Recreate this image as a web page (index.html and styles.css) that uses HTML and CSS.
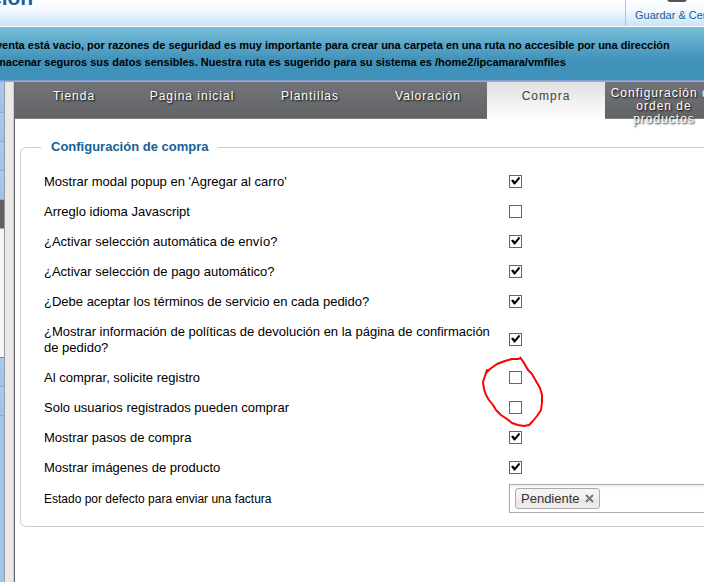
FILE: index.html
```html
<!DOCTYPE html>
<html lang="es">
<head>
<meta charset="utf-8">
<title>Configuración</title>
<link rel="stylesheet" href="styles.css">
</head>
<body>
<header class="header">
  <h1 class="title">ción</h1>
  <button class="save" type="button">
    <svg class="save-icon" viewBox="0 0 22 4" aria-hidden="true"><path d="M1 0h20v1l-2 2H3L1 1z" fill="#555"/><path d="M4 0h13v1H4z" fill="#ddd"/></svg>
    <span>Guardar &amp; Cerrar</span>
  </button>
</header>
<div class="notice">
  <p class="notice-text">venta está vacio, por razones de seguridad es muy importante para crear una carpeta en una ruta no accesible por una dirección<br>macenar seguros sus datos sensibles. Nuestra ruta es sugerido para su sistema es /home2/ipcamara/vmfiles</p>
</div>
<div class="layout">
  <aside class="sidebar">
    <div class="side-item"></div>
    <div class="side-item"></div>
    <div class="side-item"></div>
    <div class="side-item"></div>
    <div class="side-item side-active"></div>
    <div class="side-panel"></div>
    <div class="side-item"></div>
    <div class="side-item"></div>
  </aside>
  <div class="gutter"></div>
  <main class="main">
    <nav class="tabs">
      <a class="tab" href="#tienda">Tienda</a>
      <a class="tab" href="#inicial">Pagina inicial</a>
      <a class="tab" href="#plantillas">Plantillas</a>
      <a class="tab" href="#valoracion">Valoración</a>
      <a class="tab tab-active" href="#compra">Compra</a>
      <a class="tab tab-tall" href="#orden">Configuración de orden de productos</a>
    </nav>
    <form class="form">
      <fieldset class="group">
        <legend class="legend">Configuración de compra</legend>
        <div class="row"><label class="label" for="c1">Mostrar modal popup en 'Agregar al carro'</label><input class="check" type="checkbox" id="c1" checked></div>
        <div class="row"><label class="label" for="c2">Arreglo idioma Javascript</label><input class="check" type="checkbox" id="c2"></div>
        <div class="row"><label class="label" for="c3">¿Activar selección automática de envío?</label><input class="check" type="checkbox" id="c3" checked></div>
        <div class="row"><label class="label" for="c4">¿Activar selección de pago automático?</label><input class="check" type="checkbox" id="c4" checked></div>
        <div class="row"><label class="label" for="c5">¿Debe aceptar los términos de servicio en cada pedido?</label><input class="check" type="checkbox" id="c5" checked></div>
        <div class="row"><label class="label" for="c6">¿Mostrar información de políticas de devolución en la página de confirmación de pedido?</label><input class="check" type="checkbox" id="c6" checked></div>
        <div class="marked">
          <div class="row"><label class="label" for="c7">Al comprar, solicite registro</label><input class="check" type="checkbox" id="c7"></div>
          <div class="row"><label class="label" for="c8">Solo usuarios registrados pueden comprar</label><input class="check" type="checkbox" id="c8"></div>
          <svg class="mark" viewBox="480 354 66 76" aria-hidden="true"><path d="M521 358L518 359L512 359L505 361L497 364L490 369L486 373L487 370L485 376L483 382L484 389L486 395L489 400L493 405L496 410L501 415L507 419L512 423L518 425L524 426L529 425L533 421L537 416L541 410L542 402L542 395L540 388L536 381L532 374L528 370L524 363L520 357" fill="none" stroke="#f00" stroke-width="2" stroke-linejoin="round"/></svg>
        </div>
        <div class="row"><label class="label" for="c9">Mostrar pasos de compra</label><input class="check" type="checkbox" id="c9" checked></div>
        <div class="row"><label class="label" for="c10">Mostrar imágenes de producto</label><input class="check" type="checkbox" id="c10" checked></div>
        <div class="row"><label class="label label-small" for="status">Estado por defecto para enviar una factura</label>
          <div class="chosen">
            <span class="tag">Pendiente<button class="remove" type="button" aria-label="Quitar"><svg class="cross" viewBox="0 0 9 9" aria-hidden="true"><path d="M1 1l7 7M8 1L1 8" stroke="#777" stroke-width="2"/></svg></button></span>
            <input class="search" id="status" type="text">
          </div>
        </div>
      </fieldset>
    </form>
  </main>
</div>
</body>
</html>
```
FILE: styles.css
```css
* { box-sizing: border-box; }
body {
  margin: 0;
  min-height: 100vh;
  display: flex;
  flex-direction: column;
  overflow: hidden;
  background: #fff;
  color: #000;
  font: 13px/16px "Liberation Sans", Arial, sans-serif;
}
.header {
  height: 27px;
  flex: none;
  display: flex;
  align-items: flex-end;
  justify-content: space-between;
  overflow: hidden;
  background: linear-gradient(#fff, #f4f9ff 40%, #cae3fa);
  border-bottom: 1px solid #fff;
}
.title {
  margin: 0 0 0 -10px;
  padding-bottom: 16px;
  color: #146295;
  font-size: 21px;
  line-height: 24px;
}
.save {
  flex: none;
  width: 79px;
  height: 27px;
  padding: 0 0 0 9px;
  border: 0;
  border-left: 1px solid #bbc3cc;
  background: none;
  color: #146295;
  font: inherit;
  font-size: 11px;
  line-height: 14px;
  text-align: left;
  white-space: nowrap;
  display: flex;
  flex-direction: column;
  gap: 5px;
}
.save-icon { width: 22px; height: 4px; margin-left: 31px; }
.notice {
  height: 55px;
  flex: none;
  padding-top: 10px;
  overflow: hidden;
  background: linear-gradient(#78bfd8, #4192bb 60%, #4192bb);
  border-bottom: 1px solid #aaa;
  box-shadow: inset 0 -1px #849bd0;
}
.notice-text {
  margin: 0 0 0 -4px;
  font-size: 11px;
  line-height: 17px;
  font-weight: bold;
  white-space: nowrap;
}
.layout { flex: 1; display: flex; }
.sidebar {
  flex: none;
  width: 5px;
  background: #9fc4ec;
  border-right: 1px solid #999;
}
.side-item {
  height: 29px;
  border-bottom: 1px solid #8aa9cb;
  background: linear-gradient(#a8c9ef, #9cc2ec);
}
.side-item:first-child { height: 31px; }
.side-active { background: #626262; }
.side-panel { height: 129px; background: #f6f6f6; border-bottom: 1px solid #888; }
.gutter {
  flex: none;
  width: 10px;
  background: #e9e9e9;
  border-right: 1px solid #666;
  box-shadow: inset -1px 0 #ccc;
}
.main { flex: 1; min-width: 0; }
.tabs {
  display: flex;
  height: 37px;
  background: linear-gradient(#737478, #626366);
  box-shadow: inset 0 -1px #808080;
}
.tab {
  flex: none;
  width: 118px;
  height: 37px;
  padding-top: 8px;
  color: #fff;
  font-size: 12px;
  line-height: 13px;
  letter-spacing: 1px;
  text-align: center;
  text-decoration: none;
  text-shadow: 1px 1px 2px #000;
}
.tab-active {
  background: linear-gradient(#e0e0e0, #fff);
  color: #444;
  text-shadow: none;
}
.tab-tall { padding-top: 5px; }
.form { padding: 20px 0 0 5px; }
.group {
  margin: 0 -20px 0 0;
  padding: 11px 10px 12px 23px;
  border: 1px solid #ccc;
  border-radius: 6px;
}
.legend {
  margin-left: -3px;
  padding: 0 10px;
  color: #146295;
  font-size: 13px;
  font-weight: bold;
}
.row {
  display: grid;
  grid-template-columns: 465px 1fr;
  align-items: center;
  min-height: 30px;
}
.label { padding: 8px 16px 6px 0; }
.label-small { font-size: 12px; }
.check {
  appearance: none;
  width: 13px;
  height: 13px;
  margin: 0;
  border: 1px solid #666;
  background: #fff;
}
.check:checked::before {
  content: "";
  display: block;
  width: 11px;
  height: 11px;
  background: #000;
  clip-path: polygon(1px 5px, 3px 4px, 5px 6px, 9px 1px, 10px 3px, 5px 9px, 4px 9px);
}
.marked { position: relative; }
.mark {
  position: absolute;
  left: 436px;
  top: -8px;
  width: 66px;
  height: 76px;
  pointer-events: none;
}
.chosen {
  display: flex;
  align-items: center;
  height: 29px;
  margin: 2px 0 1px;
  padding: 0 5px;
  border: 1px solid #aaa;
  background: linear-gradient(#eee 1%, #fff 15%);
}
.tag {
  flex: none;
  display: flex;
  align-items: center;
  gap: 5px;
  height: 21px;
  padding: 0 5px;
  border: 1px solid #aaa;
  border-radius: 3px;
  background: linear-gradient(#f4f4f4, #f0f0f0 50%, #e8e8e8 52%, #eee);
  color: #333;
}
.remove { padding: 0; border: 0; background: none; display: flex; }
.cross { width: 9px; height: 9px; }
.search {
  flex: 1;
  min-width: 0;
  border: 0;
  background: none;
  font: inherit;
}
```
